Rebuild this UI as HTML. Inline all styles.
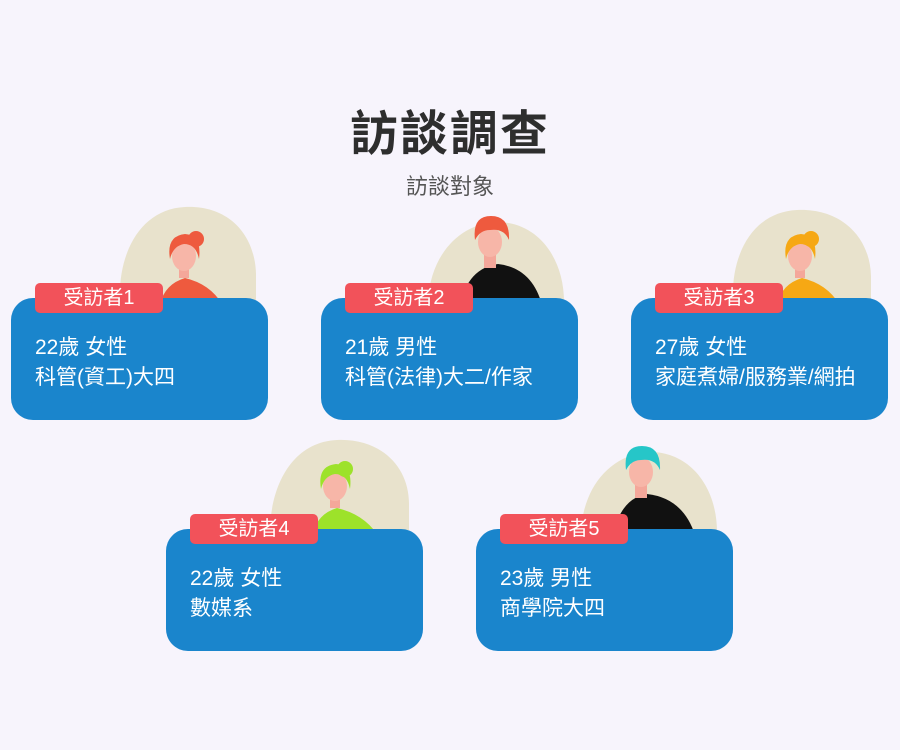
<!DOCTYPE html>
<html><head><meta charset="utf-8"><style>
body{margin:0;width:900px;height:750px;background:#f7f4fc;font-family:"Liberation Sans","Noto Sans CJK TC",sans-serif;position:relative;overflow:hidden}
h1{position:absolute;top:94px;left:0;width:900px;text-align:center;margin:0;font-size:48px;font-weight:700;color:#2e2e2e;letter-spacing:2px}
.sub{position:absolute;top:169px;width:900px;text-align:center;font-size:22px;color:#555}
.card{position:absolute;width:257px;height:122px;background:#1a85cc;border-radius:22px;color:#fff}
.card .t{position:absolute;left:24px;top:35px;font-size:21px;line-height:30px;white-space:nowrap}
.lab{position:absolute;width:128px;height:30px;background:#f2525a;border-radius:5px;color:#fff;font-size:20px;text-align:center;line-height:30px}
svg.av{position:absolute}
</style></head><body>
<h1>訪談調查</h1>
<div class="sub">訪談對象</div>

<svg class="av" style="left:110px;top:204px" width="150" height="100">
<path d="M10 96 C8 50 30 5 75 3 C118 1 145 30 146 70 L146 96Z" fill="#e8e2cc"/>
<path d="M50 100 Q55 80 75 74 Q100 80 112 100Z" fill="#ee5a3e"/>
<rect x="69" y="58" width="10" height="16" fill="#f4a79a"/>
<ellipse cx="74" cy="52" rx="12" ry="15" fill="#f7b6a8"/>
<path d="M60 55 Q56 32 75 30 Q92 31 89 55 Q86 40 74 40 Q63 42 60 55Z" fill="#ee5a3e"/>
<circle cx="86" cy="35" r="8" fill="#ee5a3e"/>
</svg>
<svg class="av" style="left:420px;top:210px" width="150" height="95">
<path d="M8 92 C10 45 40 12 80 12 C120 14 144 50 144 92Z" fill="#e8e2cc"/>
<path d="M40 95 Q48 58 78 54 Q112 58 122 95Z" fill="#111"/>
<rect x="64" y="36" width="12" height="22" fill="#f4a79a"/>
<ellipse cx="70" cy="32" rx="12" ry="15" fill="#f7b6a8"/>
<path d="M55 30 Q52 6 71 6 Q90 6 89 30 Q84 18 70 20 Q60 20 55 30Z" fill="#ee5a3e"/>
</svg>
<svg class="av" style="left:725px;top:204px" width="150" height="100">
<path d="M8 96 C6 50 28 8 72 6 C115 4 145 32 146 72 L146 96Z" fill="#e8e2cc"/>
<path d="M52 100 Q57 80 77 74 Q102 80 114 100Z" fill="#f6a814"/>
<rect x="70" y="58" width="10" height="16" fill="#f4a79a"/>
<ellipse cx="75" cy="52" rx="12" ry="15" fill="#f7b6a8"/>
<path d="M61 55 Q57 32 76 30 Q93 31 90 55 Q87 40 75 40 Q64 42 61 55Z" fill="#f6a814"/>
<circle cx="86" cy="35" r="8" fill="#f6a814"/>
</svg>
<svg class="av" style="left:265px;top:434px" width="150" height="100">
<path d="M5 96 C6 50 28 8 72 6 C115 4 145 32 144 72 L144 96Z" fill="#e8e2cc"/>
<path d="M48 100 Q52 80 72 74 Q98 80 112 100Z" fill="#9de22a"/>
<rect x="65" y="58" width="10" height="16" fill="#f4a79a"/>
<ellipse cx="70" cy="52" rx="12" ry="15" fill="#f7b6a8"/>
<path d="M56 55 Q52 32 71 30 Q88 31 85 55 Q82 40 70 40 Q59 42 56 55Z" fill="#9de22a"/>
<circle cx="80" cy="35" r="8" fill="#9de22a"/>
</svg>
<svg class="av" style="left:575px;top:440px" width="150" height="95">
<path d="M6 92 C8 45 38 12 78 12 C118 14 142 50 142 92Z" fill="#e8e2cc"/>
<path d="M38 95 Q46 58 72 54 Q108 58 120 95Z" fill="#111"/>
<rect x="60" y="36" width="12" height="22" fill="#f4a79a"/>
<ellipse cx="66" cy="32" rx="12" ry="15" fill="#f7b6a8"/>
<path d="M51 30 Q48 6 67 6 Q86 6 85 30 Q80 18 66 20 Q56 20 51 30Z" fill="#26c6c8"/>
</svg>

<div class="card" style="left:11px;top:298px"><div class="t">22歲 女性<br>科管(資工)大四</div></div>
<div class="lab" style="left:35px;top:283px">受訪者1</div>
<div class="card" style="left:321px;top:298px"><div class="t">21歲 男性<br>科管(法律)大二/作家</div></div>
<div class="lab" style="left:345px;top:283px">受訪者2</div>
<div class="card" style="left:631px;top:298px"><div class="t">27歲 女性<br>家庭煮婦/服務業/網拍</div></div>
<div class="lab" style="left:655px;top:283px">受訪者3</div>
<div class="card" style="left:166px;top:529px"><div class="t">22歲 女性<br>數媒系</div></div>
<div class="lab" style="left:190px;top:514px">受訪者4</div>
<div class="card" style="left:476px;top:529px"><div class="t">23歲 男性<br>商學院大四</div></div>
<div class="lab" style="left:500px;top:514px">受訪者5</div>
</body></html>
